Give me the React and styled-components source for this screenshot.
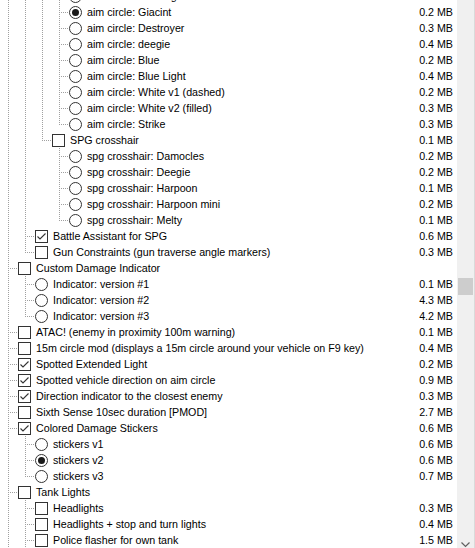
import React from 'react';
import styled, { createGlobalStyle } from 'styled-components';

const Global = createGlobalStyle`
  html, body { margin: 0; padding: 0; background: #fff; }
  body { font-family: "Liberation Sans", Arial, sans-serif; }
`;

const DOT = '#a0a0a0';
const vDots = `repeating-linear-gradient(to bottom, ${DOT} 0 1px, transparent 1px 2px)`;
const hDots = `repeating-linear-gradient(to right, ${DOT} 0 1px, transparent 1px 2px)`;

const Frame = styled.div`
  width: 475px;
  height: 548px;
  overflow: hidden;
  display: flex;
  background: #fff;
`;

const Tree = styled.div`
  flex: 1;
  overflow: hidden;
`;

const List = styled.ul`
  list-style: none;
  margin: -12px 0 0 0;
  padding: 0;
`;

const Row = styled.li`
  display: flex;
  align-items: center;
  height: 16px;
  padding-right: 4px;
  font-size: 10.7px;
  line-height: 16px;
  color: #000;
  white-space: nowrap;
`;

const Guide = styled.span`
  flex: none;
  width: 17px;
  height: 16px;
  background-repeat: no-repeat;
  ${p => p.$kind === 'pass' && `
    background-image: ${vDots};
    background-position: 8px 0;
    background-size: 1px 16px;
  `}
  ${p => p.$kind === 'tee' && `
    background-image: ${vDots}, ${hDots};
    background-position: 8px 0, 8px 8px;
    background-size: 1px 16px, 9px 1px;
  `}
  ${p => p.$kind === 'last' && `
    background-image: ${vDots}, ${hDots};
    background-position: 8px 0, 8px 8px;
    background-size: 1px 9px, 9px 1px;
  `}
`;

const Box = styled.span`
  flex: none;
  box-sizing: border-box;
  width: 13px;
  height: 13px;
  margin-left: 1px;
  border: 1px solid #333;
  background: #fff;
  display: flex;
  align-items: center;
  justify-content: center;
`;

const Radio = styled(Box)`
  border-radius: 50%;
  &::after {
    content: '';
    display: ${p => (p.$on ? 'block' : 'none')};
    width: 7px;
    height: 7px;
    border-radius: 50%;
    background: #1a1a1a;
  }
`;

const Label = styled.span`
  flex: 1;
  padding-left: 5px;
  overflow: hidden;
`;

const Size = styled.span`
  flex: none;
  text-align: right;
`;

const ScrollBar = styled.div`
  flex: none;
  box-sizing: border-box;
  width: 18px;
  padding-top: 278px;
  background: #f0f0f0;
  display: flex;
  flex-direction: column;
  align-items: center;
  border-right: 1px solid #dadada;
`;

const Thumb = styled.div`
  width: 15px;
  height: 17px;
  background: #cdcdcd;
  flex: none;
`;

const Spacer = styled.div`
  flex: 1;
`;

const DownArrow = styled.div`
  flex: none;
  height: 9px;
  width: 17px;
  display: flex;
  justify-content: center;
  align-items: flex-end;
`;

const rows = [
  { d: 3, t: 'r', label: 'aim circle: Glowing', size: '0.3 MB' },
  { d: 3, t: 'r', label: 'aim circle: Giacint', size: '0.2 MB', on: true },
  { d: 3, t: 'r', label: 'aim circle: Destroyer', size: '0.3 MB' },
  { d: 3, t: 'r', label: 'aim circle: deegie', size: '0.4 MB' },
  { d: 3, t: 'r', label: 'aim circle: Blue', size: '0.2 MB' },
  { d: 3, t: 'r', label: 'aim circle: Blue Light', size: '0.4 MB' },
  { d: 3, t: 'r', label: 'aim circle: White v1 (dashed)', size: '0.2 MB' },
  { d: 3, t: 'r', label: 'aim circle: White v2 (filled)', size: '0.3 MB' },
  { d: 3, t: 'r', label: 'aim circle: Strike', size: '0.3 MB' },
  { d: 2, t: 'c', label: 'SPG crosshair', size: '0.1 MB' },
  { d: 3, t: 'r', label: 'spg crosshair: Damocles', size: '0.2 MB' },
  { d: 3, t: 'r', label: 'spg crosshair: Deegie', size: '0.2 MB' },
  { d: 3, t: 'r', label: 'spg crosshair: Harpoon', size: '0.1 MB' },
  { d: 3, t: 'r', label: 'spg crosshair: Harpoon mini', size: '0.2 MB' },
  { d: 3, t: 'r', label: 'spg crosshair: Melty', size: '0.1 MB' },
  { d: 1, t: 'c', label: 'Battle Assistant for SPG', size: '0.6 MB', on: true },
  { d: 1, t: 'c', label: 'Gun Constraints (gun traverse angle markers)', size: '0.3 MB' },
  { d: 0, t: 'c', label: 'Custom Damage Indicator', size: '' },
  { d: 1, t: 'r', label: 'Indicator: version #1', size: '0.1 MB' },
  { d: 1, t: 'r', label: 'Indicator: version #2', size: '4.3 MB' },
  { d: 1, t: 'r', label: 'Indicator: version #3', size: '4.2 MB' },
  { d: 0, t: 'c', label: 'ATAC! (enemy in proximity 100m warning)', size: '0.1 MB' },
  { d: 0, t: 'c', label: '15m circle mod (displays a 15m circle around your vehicle on F9 key)', size: '0.4 MB' },
  { d: 0, t: 'c', label: 'Spotted Extended Light', size: '0.2 MB', on: true },
  { d: 0, t: 'c', label: 'Spotted vehicle direction on aim circle', size: '0.9 MB', on: true },
  { d: 0, t: 'c', label: 'Direction indicator to the closest enemy', size: '0.3 MB', on: true },
  { d: 0, t: 'c', label: 'Sixth Sense 10sec duration [PMOD]', size: '2.7 MB' },
  { d: 0, t: 'c', label: 'Colored Damage Stickers', size: '0.6 MB', on: true },
  { d: 1, t: 'r', label: 'stickers v1', size: '0.6 MB' },
  { d: 1, t: 'r', label: 'stickers v2', size: '0.6 MB', on: true },
  { d: 1, t: 'r', label: 'stickers v3', size: '0.7 MB' },
  { d: 0, t: 'c', label: 'Tank Lights', size: '' },
  { d: 1, t: 'c', label: 'Headlights', size: '0.3 MB' },
  { d: 1, t: 'c', label: 'Headlights + stop and turn lights', size: '0.4 MB' },
  { d: 1, t: 'c', label: 'Police flasher for own tank', size: '1.5 MB' },
  { d: 1, t: 'c', label: 'Parking lights', size: '0.2 MB' },
  { d: 0, t: 'c', label: 'Zoom mod', size: '0.1 MB' },
];

function continues(i, level) {
  for (let j = i + 1; j < rows.length; j++) {
    if (rows[j].d < level) return false;
    if (rows[j].d === level) return true;
  }
  return false;
}

function CheckMark() {
  return (
    <svg width="11" height="11" viewBox="0 0 11 11">
      <polyline points="1.5,5.5 4,8 9.5,2.5" fill="none" stroke="#333" strokeWidth="1.1" />
    </svg>
  );
}

function TreeRow({ row, i }) {
  const guides = [];
  for (let k = 0; k < row.d; k++) {
    guides.push(<Guide key={k} $kind={continues(i, k) ? 'pass' : 'none'} />);
  }
  guides.push(<Guide key="own" $kind={continues(i, row.d) ? 'tee' : 'last'} />);
  return (
    <Row>
      {guides}
      {row.t === 'r' ? <Radio $on={row.on} /> : <Box>{row.on && <CheckMark />}</Box>}
      <Label>{row.label}</Label>
      <Size>{row.size}</Size>
    </Row>
  );
}

export default function App() {
  return (
    <>
      <Global />
      <Frame>
        <Tree>
          <List>
            {rows.map((r, i) => (
              <TreeRow key={i} row={r} i={i} />
            ))}
          </List>
        </Tree>
        <ScrollBar>
          <Thumb />
          <Spacer />
          <DownArrow>
            <svg width="9" height="6" viewBox="0 0 9 6">
              <polyline points="0.5,0.5 4.5,4.5 8.5,0.5" fill="none" stroke="#606060" strokeWidth="1.2" />
            </svg>
          </DownArrow>
        </ScrollBar>
      </Frame>
    </>
  );
}
